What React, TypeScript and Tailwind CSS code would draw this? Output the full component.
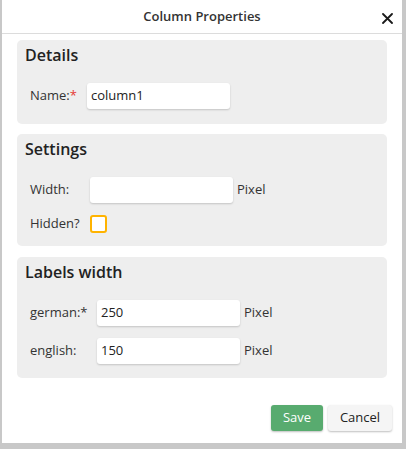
const font = { fontFamily: '"Open Sans", "Noto Sans", sans-serif' };

const Panel = ({
  title,
  className,
  children,
}: {
  title: string;
  className: string;
  children: React.ReactNode;
}) => (
  <div className={`rounded-[5px] bg-[#eeeeee] pl-2 pt-1 ${className}`}>
    <h2 className="text-[16px] font-semibold leading-[22px] text-[#222]">{title}</h2>
    {children}
  </div>
);

const TextField = ({ value, unit }: { value: string; unit?: boolean }) => (
  <div className="flex items-center">
    <div className="flex h-[26px] w-[143px] items-center rounded-[3px] bg-white px-1 text-[13px] text-[#222] shadow-[0_1px_2px_rgba(0,0,0,0.18)]">
      {value}
    </div>
    {unit && <span className="ml-1 text-[13px] text-[#333]">Pixel</span>}
  </div>
);

export default function App() {
  return (
    <div className="h-[449px] w-[406px] bg-[#c8c8c8]" style={font}>
      <div className="ml-[2px] flex h-[443px] w-[400px] flex-col bg-white">
        <div className="relative flex h-[34px] items-center justify-center border-b border-[#dcdcdc]">
          <span className="text-[13px] font-semibold text-[#333]">Column Properties</span>
          <svg
            className="absolute right-[9px] top-[13px]"
            width="11"
            height="11"
            viewBox="0 0 11 11"
            stroke="#1a1a1a"
            strokeWidth="1.8"
            strokeLinecap="round"
          >
            <path d="M1 1 L10 10 M10 1 L1 10" />
          </svg>
        </div>

        <div className="flex flex-col px-[15px] pt-[6px]">
          <Panel title="Details" className="h-[84px]">
            <div className="mt-[17px] flex items-center pl-[5px]">
              <span className="w-[57px] text-[13px] text-[#333]">
                Name:<span className="text-[#e53935]">*</span>
              </span>
              <TextField value="column1" />
            </div>
          </Panel>

          <Panel title="Settings" className="mt-[10px] h-[112px]">
            <div className="mt-[17px] flex items-center pl-[5px]">
              <span className="w-[60px] text-[13px] text-[#333]">Width:</span>
              <TextField value="" unit />
            </div>
            <div className="mt-[11px] flex items-center pl-[5px]">
              <span className="w-[60px] text-[13px] text-[#333]">Hidden?</span>
              <div className="h-[18px] w-[17px] rounded-[3px] border-2 border-[#ffb300] bg-white" />
            </div>
          </Panel>

          <Panel title="Labels width" className="mt-[11px] h-[121px]">
            <div className="mt-[17px] flex items-center pl-[5px]">
              <span className="w-[67px] text-[13px] text-[#333]">german:*</span>
              <TextField value="250" unit />
            </div>
            <div className="mt-[12px] flex items-center pl-[5px]">
              <span className="w-[67px] text-[13px] text-[#333]">english:</span>
              <TextField value="150" unit />
            </div>
          </Panel>
        </div>

        <div className="mt-auto flex justify-end gap-[5px] pb-[12px] pr-[10px]">
          <button className="h-[26px] w-[52px] rounded-[3px] bg-[#58ab6f] text-[13px] text-white shadow-[0_1px_2px_rgba(0,0,0,0.25)]">
            Save
          </button>
          <button className="h-[26px] w-[64px] rounded-[3px] bg-[#f5f5f5] text-[13px] text-[#222] shadow-[0_1px_2px_rgba(0,0,0,0.25)]">
            Cancel
          </button>
        </div>
      </div>
    </div>
  );
}
